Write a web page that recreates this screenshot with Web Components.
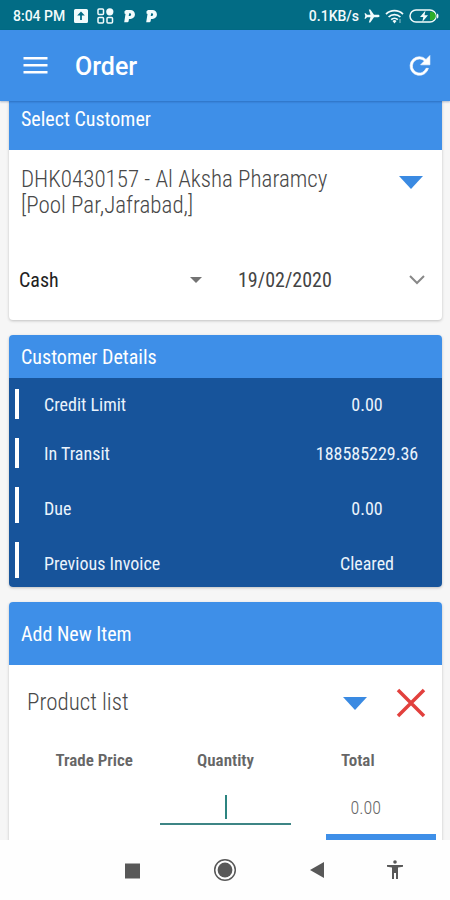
<!DOCTYPE html>
<html lang="en">
<head>
<meta charset="utf-8">
<meta name="viewport" content="width=device-width, initial-scale=1">
<title>Order</title>
<style>
  html, body { height: 100%; margin: 0; }
  body {
    --blue: #3e8fe8;
    --navy: #17549b;
    font-family: "Roboto Condensed", "Liberation Sans", sans-serif;
    background: #f6f6f6;
    overflow: hidden;
  }
</style>
</head>
<body>
<order-screen></order-screen>

<template id="t-screen">
  <style>
    :host { display: flex; flex-direction: column; height: 100vh; }
    main { flex: 1; min-height: 0; overflow: hidden; padding: 0 8px 0 9px; background: #f6f6f6; }
    .stack { display: flex; flex-direction: column; gap: 15px; margin-top: -14px; }
  </style>
  <status-bar></status-bar>
  <app-bar>Order</app-bar>
  <main>
    <div class="stack">
      <panel-card>
        <span slot="title">Select Customer</span>
        <customer-form></customer-form>
      </panel-card>
      <panel-card compact>
        <span slot="title">Customer Details</span>
        <customer-details></customer-details>
      </panel-card>
      <panel-card>
        <span slot="title">Add New Item</span>
        <item-form></item-form>
      </panel-card>
    </div>
  </main>
  <nav-bar></nav-bar>
</template>

<template id="t-status">
  <style>
    :host { display: flex; justify-content: space-between; align-items: center; height: 30px; flex: none;
      padding: 2px 11px 0 13px; box-sizing: border-box; background: #026c85; color: #f2fbfc;
      font: 500 14px/20px Roboto, sans-serif; }
    div { display: flex; align-items: center; }
    .left { gap: 9px; }
    .right { gap: 5px; }
    svg { display: block; fill: currentColor; }
  </style>
  <div class="left">
    <span>8:04 PM</span>
    <svg width="14" height="14" viewBox="0 0 14 14"><path fill-rule="evenodd" d="M1.500 0h11a1.500 1.500 0 0 1 1.500 1.500v11a1.500 1.500 0 0 1-1.500 1.500h-11A1.500 1.500 0 0 1 0 12.500v-11A1.500 1.500 0 0 1 1.500 0zM7 2.500 3.200 6.500h2.900V11h1.800V6.500h2.900z"/></svg>
    <svg width="17" height="16" viewBox="0 0 17 16"><g fill="none" stroke="currentColor" stroke-width="1.500"><rect x="1" y="1" width="5.500" height="5.500" rx="1"/><rect x="1" y="9.500" width="5.500" height="5.500" rx="1"/><rect x="10" y="9.500" width="5.500" height="5.500" rx="1"/></g><circle cx="12.800" cy="3.800" r="3.600"/></svg>
    <svg width="13" height="14" viewBox="0 0 13 14"><path fill-rule="evenodd" d="M3 1h4.500a4.400 4.400 0 0 1 0 8.900H6l-.4 2.300a1.300 1.300 0 0 1-1.300 1H1.200L2.500 5 1.500 4.500V2.300zM6.200 4.300 5.700 7h1.300a1.400 1.400 0 0 0 .2-2.700z"/></svg>
    <svg width="13" height="14" viewBox="0 0 13 14"><path fill-rule="evenodd" d="M3 1h4.500a4.400 4.400 0 0 1 0 8.900H6l-.4 2.300a1.300 1.300 0 0 1-1.300 1H1.200L2.500 5 1.500 4.500V2.300zM6.200 4.300 5.700 7h1.300a1.400 1.400 0 0 0 .2-2.700z"/></svg>
  </div>
  <div class="right">
    <span>0.1KB/s</span>
    <svg width="16" height="14" viewBox="0 0 16 14"><path d="M15.500 7c0-.8-.6-1.200-1.400-1.200H10L6.300.5H4.800l1.700 5.300H3L1.700 4.200H.5L1.300 7 .5 9.800h1.200L3 8.200h3.500l-1.700 5.300h1.500L10 8.200h4.100c.8 0 1.400-.4 1.400-1.200z"/></svg>
    <svg width="19" height="15" viewBox="0 0 19 15"><g fill="none" stroke="currentColor" stroke-width="1.700"><path d="M1 5.200a12 12 0 0 1 17 0"/><path d="M3.600 8a8.300 8.300 0 0 1 11.800 0"/><path d="M6.200 10.700a4.700 4.700 0 0 1 6.600 0"/></g><path d="m7.500 12 2 2.400 2-2.400a2.900 2.900 0 0 0-4 0z"/><path opacity=".6" d="M14.500 10h1v4h-1z"/></svg>
    <svg width="30" height="14" viewBox="0 0 30 14"><rect x="1" y="1" width="26" height="12" rx="6" fill="none" stroke="currentColor" stroke-width="1.500"/><path d="M28 4.500q1.500 0 1.500 2.500T28 9.500z"/><path fill="#2fae2b" d="M21 2.700h1.500a4.300 4.300 0 0 1 0 8.600H21z"/><path d="M16.500 1.500 11 8h3.300l-1 5L19 6.200h-3.500z"/></svg>
  </div>
</template>

<template id="t-appbar">
  <style>
    :host { display: flex; align-items: center; flex: none; height: 71px; padding: 0 16px 0 21px; box-sizing: border-box;
      background: var(--blue); color: #fff; position: relative; z-index: 1; box-shadow: 0 1px 2px rgba(0,40,100,.3); }
    h1 { flex: 1; margin: 0; padding: 2px 0 0 26px; font: 500 25px/32px Roboto, sans-serif; }
    button { border: 0; padding: 0; background: none; color: inherit; display: block; }
    svg { display: block; fill: currentColor; }
  </style>
  <button aria-label="Menu"><svg width="28" height="28" viewBox="0 0 28 28"><path d="M2.500 5h24v2.500h-24zM2.500 12h24v2.500h-24zM2.500 19h24v2.500h-24z"/></svg></button>
  <h1><slot></slot></h1>
  <button aria-label="Refresh"><svg width="28" height="28" viewBox="0 0 24 24"><path d="M17.650 6.350A7.960 7.960 0 0 0 12 4a8 8 0 1 0 7.730 10h-2.080A6 6 0 1 1 12 6c1.660 0 3.140.69 4.220 1.780L13 11h8V3z" stroke="currentColor" stroke-width=".5" transform="translate(-.5 0)"/></svg></button>
</template>

<template id="t-card">
  <style>
    :host { display: block; border-radius: 4px; background: #fff; overflow: hidden; box-shadow: 0 1px 3px rgba(0,0,0,.22); }
    h2 { margin: 0; padding: 20px 12px 19px; background: var(--blue); color: #fff; font-size: 20px; line-height: 24px; font-weight: 400; }
    :host([compact]) h2 { padding: 10px 12px 9px; }
  </style>
  <section><h2><slot name="title"></slot></h2><slot></slot></section>
</template>

<template id="t-customer">
  <style>
    :host { display: block; padding: 17px 17px 24px 10px; color: #222; }
    button { border: 0; background: none; padding: 0; margin: 0; font: inherit; color: inherit; text-align: left; }
    svg { display: block; flex: none; }
    .customer { display: flex; justify-content: space-between; align-items: flex-start; gap: 40px; width: 100%;
      padding: 0 1px 0 2px; font-weight: 300; font-size: 23px; line-height: 26px; color: #484848; }
    .customer svg { margin-top: 9px; }
    .row { display: grid; grid-template-columns: 183px 1fr; gap: 36px; margin-top: 45px; font-size: 20px; line-height: 32px; }
    .pick { display: flex; align-items: center; }
    select { appearance: none; flex: 1; border: 0; padding: 0; background: none; font: inherit; color: inherit; }
    .date { display: flex; align-items: center; justify-content: space-between; color: #444; }
  </style>
  <button class="customer" aria-label="Customer" aria-haspopup="listbox">
    <span>DHK0430157 - Al Aksha Pharamcy [Pool Par,Jafrabad,]</span>
    <svg width="26" height="13" viewBox="0 0 26 13"><path fill="#3a8ae2" d="M1 0h24L13 13z"/></svg>
  </button>
  <div class="row">
    <div class="pick">
      <select aria-label="Payment type"><option>Cash</option></select>
      <svg width="12" height="6" viewBox="0 0 12 6"><path fill="#737373" d="M0 0h12L6 6z"/></svg>
    </div>
    <button class="date" aria-label="Date"><span>19/02/2020</span>
      <svg width="16" height="10" viewBox="0 0 16 10"><path fill="none" stroke="#888" stroke-width="2" d="m1 1 7 7 7-7"/></svg>
    </button>
  </div>
</template>

<template id="t-details">
  <style>
    :host { display: block; background: var(--navy); color: #eaf3fc; }
    dl { display: flex; flex-direction: column; gap: 19px; margin: 0; padding: 11px 0 9px; font-size: 18px; line-height: 28px; }
    div { display: grid; grid-template-columns: 1fr 150px; align-items: end; height: 30px; margin-left: 6px;
      border-left: 4px solid #fff; padding-left: 25px; box-sizing: border-box; }
    .tall { height: 36px; }
    dt, dd { margin: 0; }
    dd { text-align: center; }
  </style>
  <dl>
    <div><dt>Credit Limit</dt><dd>0.00</dd></div>
    <div><dt>In Transit</dt><dd>188585229.36</dd></div>
    <div class="tall"><dt>Due</dt><dd>0.00</dd></div>
    <div class="tall"><dt>Previous Invoice</dt><dd>Cleared</dd></div>
  </dl>
</template>

<template id="t-item">
  <style>
    :host { display: block; padding: 21px 6px 12px; }
    button { border: 0; background: none; padding: 0; display: block; }
    svg { display: block; }
    .product { display: flex; align-items: center; padding: 0 10px 0 12px; }
    .pick { flex: 1; display: flex; align-items: center; }
    select { appearance: none; flex: 1; border: 0; padding: 0; background: none; font: 300 23px/34px "Roboto Condensed", sans-serif; color: #484848; }
    .remove { margin-left: 28px; }
    table { width: 100%; table-layout: fixed; border-collapse: collapse; margin-top: 28px; color: #666; }
    th { padding: 0; font-size: 17px; line-height: 24px; font-weight: 600; }
    th:first-child { padding-left: 18px; }
    th:last-child { padding-right: 16px; }
    td { padding: 10px 0 0; text-align: center; vertical-align: top; font-size: 18px; line-height: 32px; font-weight: 300; }
    td:last-child { padding-top: 20px; }
    .field { position: relative; display: block; margin: 0 5px; }
    input { display: block; width: 100%; height: 43px; box-sizing: border-box; border: 0; border-bottom: 2px solid #3d8585;
      background: none; text-align: center; font: inherit; outline: 0; }
    .caret { position: absolute; left: 50%; top: 13px; width: 2px; height: 24px; background: #2c8480; }
    .add { width: 110px; height: 48px; margin: 9px 0 0 auto; background: var(--blue); }
  </style>
  <div class="product">
    <div class="pick">
      <select aria-label="Product"><option>Product list</option></select>
      <svg width="26" height="13" viewBox="0 0 26 13"><path fill="#3a8ae2" d="M1 0h24L13 13z"/></svg>
    </div>
    <button class="remove" aria-label="Remove item"><svg width="30" height="30" viewBox="0 0 30 30"><path fill="none" stroke="#e2403d" stroke-width="3.500" d="m2 2 26 26M28 2 2 28"/></svg></button>
  </div>
  <table>
    <thead><tr><th scope="col">Trade Price</th><th scope="col">Quantity</th><th scope="col">Total</th></tr></thead>
    <tbody><tr><td></td><td><span class="field"><input aria-label="Quantity" inputmode="numeric"><i class="caret"></i></span></td><td>0.00</td></tr></tbody>
  </table>
  <button class="add" aria-label="Add item"></button>
</template>

<template id="t-nav">
  <style>
    :host { display: block; flex: none; background: #fefefe; color: #585858; }
    nav { display: grid; grid-template-columns: 93fr 93fr 79fr 20px; justify-items: start; align-items: center; height: 60px; padding: 0 45px 0 120px; }
    button { border: 0; background: none; padding: 0; color: inherit; }
    svg { display: block; fill: currentColor; }
  </style>
  <nav aria-label="System">
    <button aria-label="Recent apps"><svg width="24" height="24" viewBox="0 0 24 24"><path d="M5 5.500h15v15H5z"/></svg></button>
    <button aria-label="Home"><svg width="24" height="24" viewBox="0 0 24 24"><circle cx="12" cy="12" r="10.300" fill="none" stroke="currentColor" stroke-width="1.500"/><circle cx="12" cy="12" r="7.400"/></svg></button>
    <button aria-label="Back"><svg width="24" height="24" viewBox="0 0 24 24"><path d="M18 4v16L4 12z"/></svg></button>
    <button aria-label="Accessibility"><svg width="20" height="22" viewBox="0 0 20 22"><circle cx="10" cy="3" r="1.800"/><path d="M2 6h16v1.800l-5 .7V20h-2v-6H9v6H7V8.500l-5-.7z"/></svg></button>
  </nav>
</template>

<script>
  const define = (name, id) => customElements.define(name, class extends HTMLElement {
    constructor() {
      super();
      this.attachShadow({ mode: 'open' }).append(document.getElementById(id).content.cloneNode(true));
    }
  });
  define('status-bar', 't-status');
  define('app-bar', 't-appbar');
  define('panel-card', 't-card');
  define('customer-form', 't-customer');
  define('customer-details', 't-details');
  define('item-form', 't-item');
  define('nav-bar', 't-nav');
  define('order-screen', 't-screen');
</script>
</body>
</html>
